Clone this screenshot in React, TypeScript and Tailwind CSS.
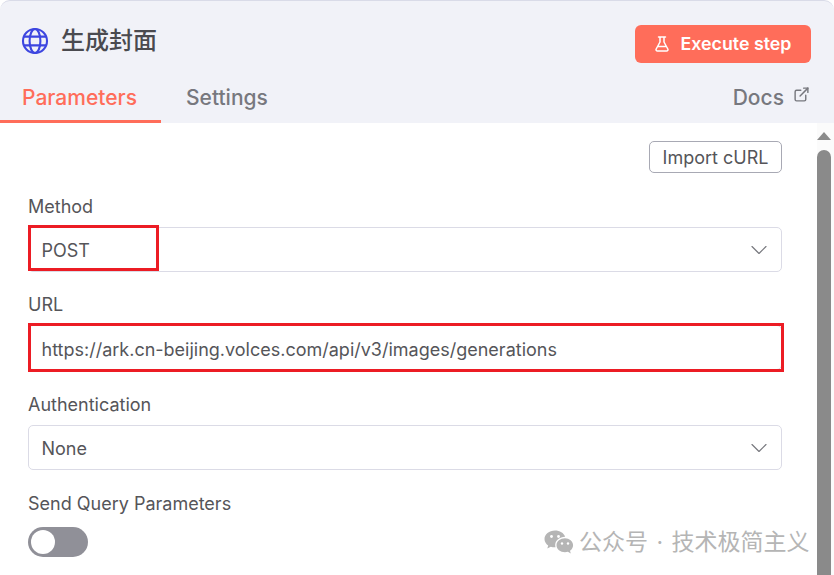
import { ExternalLink, ChevronDown } from "lucide-react";
import type { ReactNode } from "react";

const FONT = "font-['Inter','Noto_Sans_CJK_SC',sans-serif]";

function GlobeIcon() {
  return (
    <svg viewBox="0 0 28 28" fill="none" className="h-7 w-7 text-[#3d46e0]" stroke="currentColor" strokeWidth={2.1} aria-hidden>
      <circle cx="14" cy="14" r="12" />
      <ellipse cx="14" cy="14" rx="5.4" ry="12" />
      <path d="M3 9.6h22M3 18.4h22" />
    </svg>
  );
}

function FlaskIcon() {
  return (
    <svg viewBox="0 0 14 16" fill="none" className="h-[16px] w-[14px]" stroke="currentColor" strokeWidth={1.5} strokeLinejoin="round" strokeLinecap="round" aria-hidden>
      <path d="M3.500 1h7M5 1v5L1.200 13c-.5 1 .2 2 1.200 2h9.200c1 0 1.700-1 1.200-2L9 6V1M3.200 10.500h7.600" />
    </svg>
  );
}

function WeChatIcon() {
  return (
    <svg viewBox="0 0 30 25" className="h-[25px] w-[30px] fill-[#b5b5b5]" aria-hidden>
      <path d="M11 0.5C5.2 0.5 0.5 4.3 0.5 9c0 2.600 1.400 4.900 3.700 6.500l-0.900 3.100 3.500-1.900c1.200 0.400 2.500 0.600 3.900 0.600l0.800 0C11.300 16.500 11.200 15.700 11.200 15c0-4.600 4.400-8.200 9.900-8.300C19.800 3 15.800 0.500 11 0.500z" />
      <path d="M21 8.300c-4.700 0-8.500 3.100-8.500 7s3.800 7 8.500 7c1 0 2-0.200 2.900-0.500l2.900 1.600-0.800-2.600c1.900-1.300 3.100-3.300 3.100-5.500 0-3.900-3.900-7-8.100-7z" />
      <circle cx="7.500" cy="6.500" r="1.400" fill="#fff" />
      <circle cx="14.500" cy="6.500" r="1.400" fill="#fff" />
      <circle cx="18" cy="13.500" r="1.200" fill="#fff" />
      <circle cx="24" cy="13.500" r="1.200" fill="#fff" />
    </svg>
  );
}

function SelectBox({ value }: { value: string }) {
  return (
    <div className="flex h-[45px] items-center justify-between rounded-[5px] border border-[#dbdbe6] bg-white pl-[12.500px] pr-[8px]">
      <span className="pt-[1px] text-[18px] text-[#555559]">{value}</span>
      <ChevronDown className="h-[28px] w-[28px] text-[#77787e]" strokeWidth={1} />
    </div>
  );
}

function Field({ label, children }: { label: string; children: ReactNode }) {
  return (
    <div className="flex flex-col gap-[10px]">
      <label className="text-[18px] leading-[20px] text-[#555559]">{label}</label>
      {children}
    </div>
  );
}

export default function App() {
  return (
    <div className={`relative h-[575px] w-[834px] overflow-hidden bg-white ${FONT}`}>
      <header className="h-[123px] rounded-t-[10px] border-t border-[#d9dbe8] bg-[#f1f2f8]">
        <div className="flex items-start justify-between pl-[21px] pr-[23px] pt-[24px]">
          <div className="flex items-center gap-[12px] pt-[2px]">
            <GlobeIcon />
            <h1 className="text-[24px] font-medium leading-[28px] text-[#4a4a4f]">生成封面</h1>
          </div>
          <button className="flex h-[38px] w-[176px] items-center justify-center gap-[12px] rounded-[6px] bg-[#ff6d5a] text-[17.800px] font-semibold text-white">
            <FlaskIcon />
            Execute step
          </button>
        </div>
        <div className="mt-[10px] flex items-stretch justify-between pr-[24px]">
          <nav className="flex">
            <a className="flex h-[50px] w-[161px] items-center border-b-[3px] border-[#ff6d5a] pl-[22px] pt-[2px] text-[21px] font-medium text-[#ff6d5a]">
              Parameters
            </a>
            <a className="flex h-[50px] items-center pb-[1px] pl-[25px] text-[21px] font-medium text-[#77787e]">
              Settings
            </a>
          </nav>
          <a className="flex h-[50px] items-center gap-[9px] pb-[1px] text-[21px] font-medium text-[#77787e]">
            Docs
            <ExternalLink className="mb-[6px] h-[17px] w-[17px]" strokeWidth={2} />
          </a>
        </div>
      </header>

      <div className="flex">
        <main className="w-[817px] pl-[28px] pr-[35px] pt-[18px]">
          <div className="flex justify-end">
            <button className="h-[32px] w-[133px] rounded-[5px] border border-[#a8a9b4] bg-white text-[18px] text-[#555559]">
              Import cURL
            </button>
          </div>
          <div className="mt-[24px] flex flex-col gap-[25px]">
            <Field label="Method">
              <div className="relative">
                <SelectBox value="POST" />
                <div className="absolute left-0 top-[-2px] h-[46px] w-[131px] border-[3px] border-[#ec1c24]" />
              </div>
            </Field>
            <div className="mt-[-2px]">
              <Field label="URL">
                <div className="relative">
                  <div className="flex h-[45px] items-center rounded-[5px] border border-[#dbdbe6] bg-white pl-[12.500px]">
                    <span className="pt-[3px] text-[18px] text-[#555559]">https://ark.cn-beijing.volces.com/api/v3/images/generations</span>
                  </div>
                  <div className="absolute left-0 right-[-2px] top-[-2px] h-[49px] border-[3px] border-[#ec1c24]" />
                </div>
              </Field>
            </div>
            <Field label="Authentication">
              <SelectBox value="None" />
            </Field>
            <div className="mt-[-1px] flex flex-col gap-[13px]">
              <label className="text-[18px] leading-[20px] text-[#555559]">Send Query Parameters</label>
              <div className="flex h-[30px] w-[60px] items-center rounded-full bg-[#909098] pl-[3px]">
                <span className="h-[24px] w-[24px] rounded-full bg-white" />
              </div>
            </div>
          </div>
        </main>
        <aside className="relative h-[452px] w-[17px] bg-[#fbfbfb]">
          <span className="absolute left-0 top-[9px] h-0 w-0 border-x-[7px] border-b-[8px] border-x-transparent border-b-[#8a8a8a]" />
          <span className="absolute left-0 top-[27px] h-[430px] w-[14px] rounded-t-[7px] bg-[#8a8a8a]" />
        </aside>
      </div>

      <div className="absolute left-[544px] top-[528px] flex items-center gap-[7px] text-[23px] leading-[28px] text-[#b5b5b5]">
        <WeChatIcon />
        <span className="ml-[-2px] whitespace-pre">
          公众号 <span className="mx-[2px]">·</span> 技术极简主义
        </span>
      </div>
    </div>
  );
}
